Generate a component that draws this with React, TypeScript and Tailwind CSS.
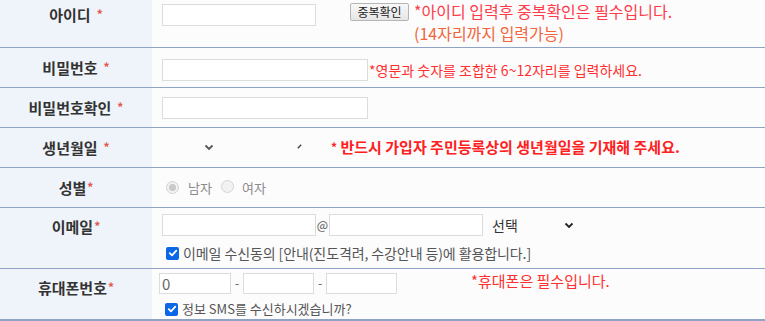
import React from "react";

const Star = ({ gap = true }: { gap?: boolean }) => (
  <span className={`text-[#e0574b] text-[12px] relative -top-[1px] ${gap ? "ml-[6px]" : "ml-[1px]"}`}>*</span>
);

const Check = () => (
  <span className="inline-flex w-[13px] h-[13px] rounded-[2px] bg-[#0b67e6] items-center justify-center shrink-0">
    <svg width="10" height="10" viewBox="0 0 10 10">
      <path d="M1.8 5.2 L4 7.3 L8.3 2.6" stroke="#fff" strokeWidth="1.8" fill="none" strokeLinecap="round" strokeLinejoin="round" />
    </svg>
  </span>
);

const Radio = ({ checked }: { checked?: boolean }) => (
  <span className="inline-flex w-[13px] h-[13px] rounded-full border border-[#d4d4d4] bg-[#f2f2f2] items-center justify-center shrink-0">
    {checked && <span className="w-[7px] h-[7px] rounded-full bg-[#c9c9c9]" />}
  </span>
);

const Chevron = ({ color = "#555" }: { color?: string }) => (
  <svg width="10" height="7" viewBox="0 0 10 7">
    <path d="M1.5 1.5 L5 5 L8.5 1.5" stroke={color} strokeWidth="1.8" fill="none" />
  </svg>
);

export default function App() {
  const label = "w-[152px] shrink-0 bg-[#eff3fa] flex justify-center text-[15px] font-bold text-[#333] leading-[22px]";
  const row = "flex border-b border-[#8fa3c6]";
  const input = "border border-[#dcdcdc] bg-white outline-none";
  return (
    <div className="w-[765px] h-[321px] bg-[#fcfcfd] overflow-hidden font-['Noto_Sans_CJK_KR','Noto_Sans',sans-serif]">
      {/* 아이디 */}
      <div className={`${row} h-[48px]`}>
        <div className={`${label} pt-[4px]`}>
          아이디<Star />
        </div>
        <div className="flex-1 flex items-start pl-[10px]">
          <input className={`${input} mt-[4px] w-[154px] h-[22px]`} />
          <button className="ml-[34px] mt-[3px] h-[18px] w-[59px] border border-[#b5b5b5] rounded-[2px] bg-gradient-to-b from-[#f8f8f8] to-[#e6e6e6] text-[12px] leading-[16px] text-[#222]">
            중복확인
          </button>
          <div className="ml-[5px] text-[16px] leading-[22px]">
            <div className="text-[#ff3b4a]">*아이디 입력후 중복확인은 필수입니다.</div>
            <div className="text-[#f2643a]">(14자리까지 입력가능)</div>
          </div>
        </div>
      </div>

      {/* 비밀번호 */}
      <div className={`${row} h-[40px]`}>
        <div className={`${label} items-center`}>
          비밀번호<Star />
        </div>
        <div className="flex-1 flex items-center pl-[10px] pt-[4px]">
          <input type="password" className={`${input} w-[206px] h-[22px]`} />
          <span className="ml-[1px] text-[14px] text-[#ff2f2f] leading-[18px]">
            *영문과 숫자를 조합한 6~12자리를 입력하세요.
          </span>
        </div>
      </div>

      {/* 비밀번호확인 */}
      <div className={`${row} h-[40px]`}>
        <div className={`${label} items-center`}>
          비밀번호확인<Star />
        </div>
        <div className="flex-1 flex items-center pl-[10px]">
          <input type="password" className={`${input} w-[206px] h-[22px]`} />
        </div>
      </div>

      {/* 생년월일 */}
      <div className={`${row} h-[40px]`}>
        <div className={`${label} items-center`}>
          생년월일<Star />
        </div>
        <div className="flex-1 flex items-center pl-[52px]">
          <Chevron />
          <svg width="5" height="5" viewBox="0 0 5 5" className="ml-[83px] -mt-[2px]">
            <path d="M0.8 4.2 L4.2 0.8" stroke="#444" strokeWidth="1.4" />
          </svg>
          <span className="ml-[29px] text-[15px] font-bold text-[#ff2020] leading-[20px]">
            <span className="text-[12px] relative -top-[1px]">*</span> 반드시 가입자 주민등록상의 생년월일을 기재해 주세요.
          </span>
        </div>
      </div>

      {/* 성별 */}
      <div className={`${row} h-[40px]`}>
        <div className={`${label} items-center`}>
          성별<Star gap={false} />
        </div>
        <div className="flex-1 flex items-center pl-[14px] text-[13px] text-[#8a8a8a] leading-[18px]">
          <Radio checked />
          <span className="ml-[9px]">남자</span>
          <span className="ml-[9px]"><Radio /></span>
          <span className="ml-[8px]">여자</span>
        </div>
      </div>

      {/* 이메일 */}
      <div className={`${row} h-[61px]`}>
        <div className={`${label} pt-[8px]`}>
          이메일<Star gap={false} />
        </div>
        <div className="flex-1 flex flex-col pl-[10px] pt-[6px]">
          <div className="flex items-center">
            <input className={`${input} border-[#cfcfcf] w-[154px] h-[22px]`} />
            <span className="w-[13px] text-center text-[12px] text-[#555]">@</span>
            <input className={`${input} border-[#cfcfcf] w-[154px] h-[22px]`} />
            <span className="ml-[9px] text-[14px] text-[#333]">선택</span>
            <span className="ml-[46px] mt-[1px]"><Chevron color="#222" /></span>
          </div>
          <div className="flex items-center mt-[7px] pl-[4px] h-[20px]">
            <Check />
            <span className="ml-[4px] text-[14px] text-[#555] leading-[18px] tracking-[-0.1px]">
              이메일 수신동의 [안내(진도격려, 수강안내 등)에 활용합니다.]
            </span>
          </div>
        </div>
      </div>

      {/* 휴대폰번호 */}
      <div className="flex border-b-2 border-[#8fa3c6] h-[52px]">
        <div className={`${label} pt-[8px]`}>
          휴대폰번호<Star gap={false} />
        </div>
        <div className="flex-1 flex flex-col pl-[7px] pt-[4px]">
          <div className="flex items-start">
            <input defaultValue="0" className={`${input} w-[72px] h-[21px] px-[2px] text-[15px] text-[#666] leading-[19px]`} />
            <span className="w-[12px] text-center text-[12px] text-[#555] leading-[20px]">-</span>
            <input className={`${input} w-[71px] h-[21px]`} />
            <span className="w-[12px] text-center text-[12px] text-[#555] leading-[20px]">-</span>
            <input className={`${input} w-[71px] h-[21px]`} />
            <span className="ml-[74px] -mt-[2px] text-[15px] text-[#ff2f2f] leading-[20px]">*휴대폰은 필수입니다.</span>
          </div>
          <div className="flex items-center mt-[5px] pl-[6px] h-[20px]">
            <Check />
            <span className="ml-[4px] text-[13px] text-[#555] leading-[18px]">정보 SMS를 수신하시겠습니까?</span>
          </div>
        </div>
      </div>
    </div>
  );
}
